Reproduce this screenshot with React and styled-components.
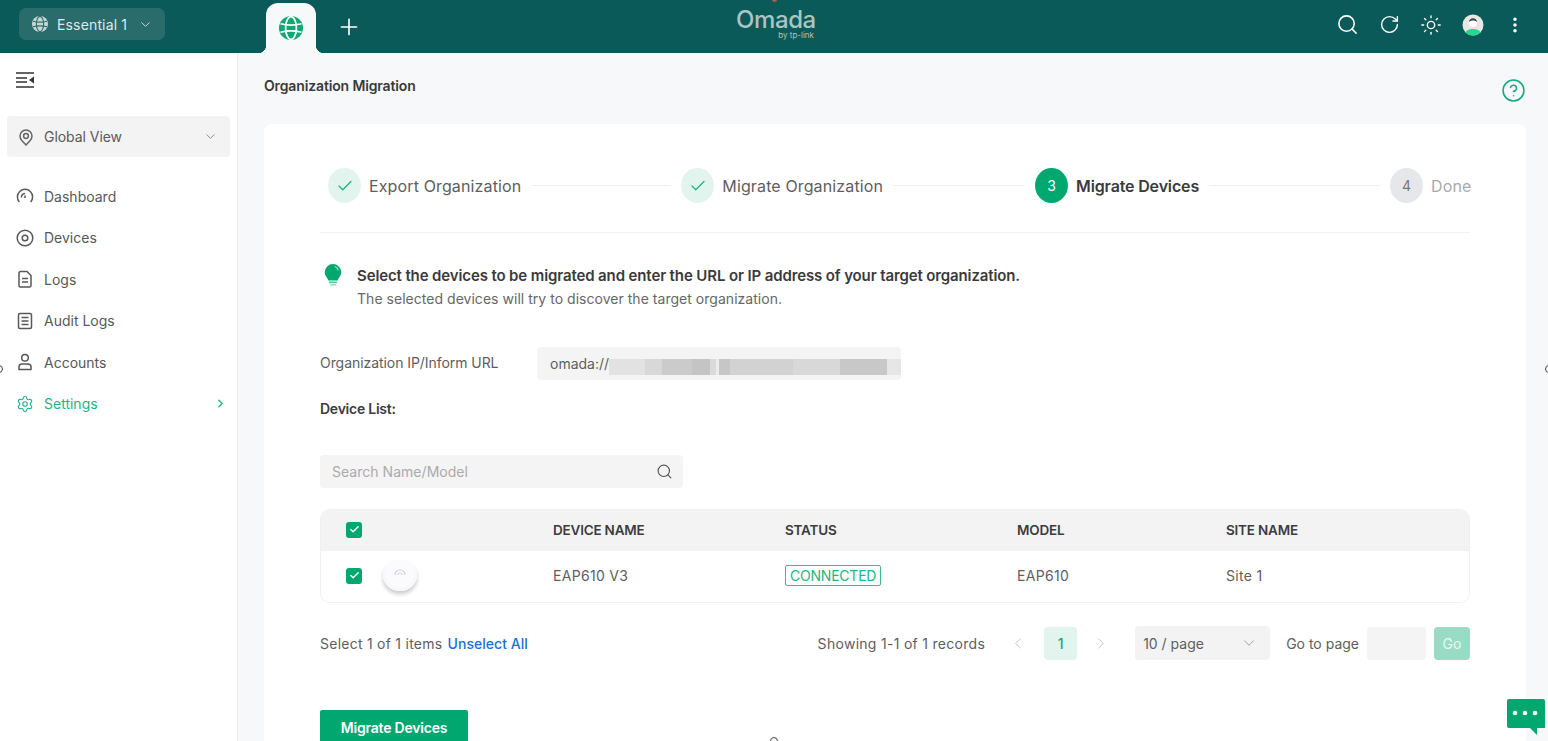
import React from "react";
import styled, { createGlobalStyle } from "styled-components";
import { Search, RotateCw, Sun, EllipsisVertical, ChevronDown, ChevronRight, ChevronLeft, Plus, Check, Settings as Gear, CircleHelp } from "lucide-react";

const Global = createGlobalStyle`
  html, body { margin: 0; padding: 0; height: 100%; overflow: hidden; background: #f7f8fa; }
  body { font-family: Inter, "Noto Sans", "Liberation Sans", sans-serif; color: #4a4a4a; -webkit-font-smoothing: antialiased; }
  * { box-sizing: border-box; }
`;
const GREEN = "#00a870";

const Page = styled.div`position: relative; width: 1548px; height: 741px; overflow: hidden; display: flex; flex-direction: column;`;
const Header = styled.header`height: 53px; flex: none; background: #0b5a5a; display: flex; align-items: flex-end;`;
const Switcher = styled.div`
  width: 146px; height: 32px; margin: 0 0 13px 19px; padding: 0 12px 0 13px; border-radius: 7px;
  background: #2a6c6b; color: #dfeae9; display: flex; align-items: center; font-size: 14px; letter-spacing: .15px;
  span { margin-left: 9px; flex: 1; }
`;
const Tab = styled.div`
  position: relative; width: 50px; height: 50px; margin-left: 101px; background: #f7f8fa; border-radius: 12px 12px 0 0;
  display: flex; align-items: center; justify-content: center;
  &::before, &::after { content: ""; position: absolute; bottom: 0; width: 8px; height: 8px; }
  &::before { left: -8px; background: radial-gradient(circle at 0 0, transparent 8px, #f7f8fa 8.5px); }
  &::after { right: -8px; background: radial-gradient(circle at 100% 0, transparent 8px, #f7f8fa 8.5px); }
`;
const AddTab = styled.div`width: 26px; margin: 0 0 13px 20px; color: #fff; display: flex;`;
const Logo = styled.div`
  margin: 0 0 11px 374px; width: 80px; height: 36px; color: #a9c6c3; padding-right: 2px;
  b { display: block; font-weight: 500; font-size: 24px; line-height: 20px; margin-top: 4px; letter-spacing: -.4px; }
  small { display: block; font-size: 8px; line-height: 9px; text-align: right; margin-top: 1px; letter-spacing: 0; }
`;
const HeaderIcons = styled.div`margin: 0 12px 0 auto; height: 53px; display: flex; align-items: center; padding-bottom: 4px;`;
const HeaderIcon = styled.div`width: 42px; display: flex; justify-content: center; color: #fff;`;

const Body = styled.div`flex: 1; display: flex; min-height: 0;`;
const Sidebar = styled.aside`width: 238px; flex: none; background: #fff; border-right: 1px solid #eceef0; padding: 19px 7px 0;`;
const Collapse = styled.div`height: 18px; margin-left: 9px; color: #333; display: flex;`;
const SiteSelect = styled.div`
  margin-top: 26px; height: 41px; width: 223px; border-radius: 4px; background: #f3f3f4; display: flex; align-items: center;
  padding: 0 12px 0 10px; font-size: 14px; color: #5a5a5a; letter-spacing: -.05px;
  span { margin-left: 9px; flex: 1; }
`;
const Nav = styled.nav`margin-top: 18.5px; display: flex; flex-direction: column;`;
const NavItem = styled.div`
  height: 41.5px; display: flex; align-items: center; padding-left: 9px; font-size: 14px; letter-spacing: 0;
  color: ${p => (p.$active ? "#1fb583" : "#585858")};
  span { margin-left: 10px; flex: 1; }
`;
const NavIcon = styled.svg`width: 18px; height: 18px; flex: none; fill: none; stroke: currentColor; stroke-width: 1.5;`;

const Main = styled.main`flex: 1; min-width: 0; padding: 0 22px 0 26px;`;
const TitleRow = styled.div`height: 71px; display: flex; justify-content: space-between; padding-top: 24px;`;
const Title = styled.h1`margin: 0; font-size: 14px; line-height: 18px; font-weight: 600; color: #3a3a3a; letter-spacing: -.14px;`;
const Help = styled.div`color: #17ad7b; margin: 1px 0 0 0; display: flex;`;
const Card = styled.section`background: #fff; border-radius: 8px; padding: 44px 56px 0; height: 640px;`;

const Stepper = styled.div`display: flex; align-items: center; height: 35px; padding-left: 8px;`;
const StepDot = styled.div`
  width: 33px; height: 35px; border-radius: 50%; flex: none; display: flex; align-items: center; justify-content: center; font-size: 14px;
  background: ${p => ({ done: "#e2f4ee", current: GREEN, todo: "#e6e7ea" }[p.$state])};
  color: ${p => ({ done: "#1fb583", current: "#fff", todo: "#777" }[p.$state])};
`;
const StepLabel = styled.div`
  margin-left: 8px; font-size: 16px; white-space: nowrap; letter-spacing: ${p => (p.$state === "current" ? "-.15px" : ".13px")};
  color: ${p => ({ done: "#5e5e5e", current: "#3a3a3a", todo: "#a9a9a9" }[p.$state])};
  font-weight: ${p => (p.$state === "current" ? 600 : 400)};
`;
const StepLine = styled.div`height: 1px; background: #f0f0f1; margin: 0 10px; width: ${p => p.$w}px; flex: none;`;
const Divider = styled.div`height: 1px; background: #f0f0f1; margin-top: 29px;`;

const Tip = styled.div`display: flex; margin-top: 30px; height: 44px;`;
const TipText = styled.div`margin-left: 14px;
  strong { display: block; font-size: 15px; line-height: 20px; font-weight: 600; color: #3a3a3a; letter-spacing: -.12px; margin-top: 3px; }
  p { margin: 4px 0 0; font-size: 14px; line-height: 18px; color: #676767; letter-spacing: .03px; }
`;
const FormRow = styled.div`display: flex; align-items: center; margin-top: 39px; height: 34px;`;
const FormLabel = styled.label`width: 217px; font-size: 14px; color: #5e5e5e; letter-spacing: -.06px; padding-bottom: 2px;`;
const UrlField = styled.div`
  width: 364px; height: 33px; border-radius: 4px; background: #f4f4f5; display: flex; align-items: center; padding-left: 13px;
  font-size: 14px; color: #5e5e5e; overflow: hidden;
`;
const Masked = styled.div`
  width: 296px; height: 16px; margin-top: 8px; flex: none;
  background: linear-gradient(90deg, #e2e2e2 0 12%, #d8d8d8 12% 18%, #cbcbcb 18% 28%, #c4c4c4 28% 34%, #dadada 34% 36%, #ececec 36% 37%, #c6c6c6 37% 41%, #d2d2d2 41% 62%, #d8d8d8 62% 78%, #c8c8c8 78% 94%, #e6e6e6 94%);
`;
const SectionLabel = styled.div`margin-top: 12px; height: 34px; line-height: 34px; font-size: 14px; font-weight: 600; color: #3c3c3c; letter-spacing: -.25px;`;
const SearchBox = styled.div`
  margin-top: 29px; width: 363px; height: 33px; border-radius: 4px; background: #f4f4f5; display: flex; align-items: center; justify-content: space-between;
  padding: 0 10px 0 12px; font-size: 14px; color: #ababab; letter-spacing: .03px;
  svg { color: #555; }
`;
const Table = styled.div`margin-top: 21px; width: 1150px; border: 1px solid #f0f0f1; border-radius: 10px; overflow: hidden;`;
const Row = styled.div`
  display: grid; grid-template-columns: 232px 232px 232px 209px 1fr; align-items: center; padding-bottom: 2px;
  height: ${p => (p.$head ? "41px" : "51px")}; background: ${p => (p.$head ? "#f3f3f4" : "#fff")};
  font-size: ${p => (p.$head ? "13.5px" : "14px")}; letter-spacing: ${p => (p.$head ? "-.2px" : ".3px")};
  font-weight: ${p => (p.$head ? 600 : 400)}; color: ${p => (p.$head ? "#3c3c3c" : "#5e5e5e")};
`;
const SelectCell = styled.div`display: flex; align-items: center; padding-left: 25px;`;
const CheckBox = styled.div`
  width: 16px; height: 16px; border-radius: 3px; background: ${GREEN}; color: #fff; display: flex; align-items: center; justify-content: center;
`;
const DevicePic = styled.div`
  width: 34px; height: 31px; margin: 0 0 0 21px; border-radius: 50%;
  background: radial-gradient(circle at 50% 40%, #fbfbfd 0 55%, #eeeef2 100%);
  box-shadow: 0 3px 4px rgba(0,0,0,.22);
  display: flex; align-items: flex-start; justify-content: center; padding-top: 7px; color: #d2d2da;
`;
const StatusBadge = styled.span`
  display: inline-block; border: 1px solid #3bbd94; border-radius: 2px; padding: 0 4px; height: 21px; line-height: 19px; width: 96px;
  color: #1fb583; font-size: 14px; letter-spacing: -.22px; white-space: nowrap;
`;
const Footer = styled.div`margin-top: 23px; width: 1150px; height: 34px; display: flex; align-items: center; font-size: 14px; color: #5e5e5e;`;
const SelectInfo = styled.div`letter-spacing: .25px; a { color: #1a70d6; font-weight: 500; letter-spacing: .03px; margin-left: 1px; }`;
const Pager = styled.div`margin-left: auto; display: flex; align-items: center;`;
const PagerText = styled.span`letter-spacing: ${p => p.$ls};`;
const PagerArrow = styled.div`width: 18px; margin: ${p => p.$m}; color: #b5b5b5; display: flex; justify-content: center;`;
const PageNum = styled.div`width: 33px; height: 33px; border-radius: 4px; background: #e2f4ee; color: #16a877; font-weight: 500; display: flex; align-items: center; justify-content: center;`;
const PageSize = styled.div`
  width: 135px; height: 34px; margin: 0 16px 0 0; border-radius: 4px; background: #f3f3f4; display: flex; align-items: center; justify-content: space-between;
  padding: 0 12px 0 8px; svg { color: #8f8f8f; }
`;
const GoInput = styled.div`width: 59px; height: 33px; margin-left: 8px; border-radius: 4px; background: #f4f4f5;`;
const GoButton = styled.div`width: 36px; height: 33px; margin-left: 8px; border-radius: 4px; background: #99dcc5; color: #e9f8f2; display: flex; align-items: center; justify-content: center;`;
const Primary = styled.button`
  display: block; margin-top: 50px; width: 148px; height: 34px; border: 0; border-radius: 2px; background: ${GREEN}; color: #fff;
  font: 600 14px Inter, sans-serif; letter-spacing: -.2px;
`;
const Chat = styled.svg`position: absolute; right: 3px; bottom: 5px; width: 38px; height: 37px;`;
const Speck = styled.i`
  position: absolute; left: ${p => p.$x}px; top: ${p => p.$y}px; width: 8px; height: 8px; border-radius: 50%;
  border: 1.5px solid #444; background: #fff;
`;
const TopDot = styled.i`position: absolute; left: 772px; top: -2px; width: 5px; height: 4px; border-radius: 50%; background: #c0563f;`;

const GlobeIcon = ({ size, bg, line }) => (
  <svg width={size} height={size} viewBox="0 0 24 24" fill="none">
    <circle cx="12" cy="12" r="12" fill={bg} />
    <ellipse cx="12" cy="12" rx="5.4" ry="11.4" stroke={line} strokeWidth="1.7" />
    <path d="M1.5 7.8C8 9.5 16 9.5 22.5 7.8M1.5 16.2C8 14.500 16 14.500 22.5 16.2" stroke={line} strokeWidth="1.7" />
  </svg>
);
const Avatar = () => (
  <svg width="22" height="22" viewBox="0 0 22 22">
    <defs><clipPath id="av"><circle cx="11" cy="11" r="10.5" /></clipPath></defs>
    <g clipPath="url(#av)">
      <rect width="22" height="22" fill="#e7e7e7" />
      <path d="M2 22c1-6 5-7 9-7s8 1 9 7z" fill="#22d98f" />
      <circle cx="11" cy="9" r="4" fill="#fff" />
      <path d="M7 8c0-5 8-5 8 0-2-2-6-2-8 0z" fill="#444" />
    </g>
  </svg>
);
const CollapseIcon = () => (
  <svg width="18" height="16" viewBox="0 0 18 16" fill="none" stroke="currentColor" strokeWidth="1.5">
    <path d="M0 1h18M0 6h11M0 10h11M0 15h18" />
    <path d="M13 8l5-3.4v6.8z" fill="currentColor" stroke="none" />
  </svg>
);
const PinIcon = () => (
  <NavIcon viewBox="0 0 18 18" style={{ color: "#666" }}>
    <path d="M9 17l-4-4.300A6.400 6.400 0 0 1 3 8a6 6 0 0 1 12 0c0 1.800-.7 3.400-2 4.700z" />
    <circle cx="9" cy="8" r="2.400" />
  </NavIcon>
);
const DashIcon = () => (
  <NavIcon viewBox="0 0 18 18" strokeWidth="1.7">
    <path d="M3.300 15A7.600 7.600 0 1 1 14.700 15M5.400 10.500A4 4 0 0 1 9 6.500M9 8.500v2.500" />
  </NavIcon>
);
const DevIcon = () => (
  <NavIcon viewBox="0 0 18 18"><circle cx="9" cy="9" r="7.800" /><circle cx="9" cy="9" r="2.800" /></NavIcon>
);
const LogIcon = () => (
  <NavIcon viewBox="0 0 18 18"><path d="M3 3a1.500 1.500 0 0 1 1.500-1.500h6.500L15 5.500v10a1.500 1.500 0 0 1-1.500 1.500h-9A1.500 1.500 0 0 1 3 15.500zM6 8.500h6M6 12h6" /></NavIcon>
);
const AuditIcon = () => (
  <NavIcon viewBox="0 0 18 18"><rect x="2.500" y="1.500" width="13" height="15" rx="1.500" /><path d="M5.500 5.500h7M5.500 9h7M5.500 12.500h7" /></NavIcon>
);
const AccountIcon = () => (
  <NavIcon viewBox="0 0 18 18"><circle cx="9" cy="4.800" r="3.300" /><path d="M3 16.500v-2.500a3 3 0 0 1 3-3h6a3 3 0 0 1 3 3v2.500z" /></NavIcon>
);
const Bulb = () => (
  <svg width="20" height="24" viewBox="0 0 20 24" style={{ flex: "none", marginLeft: 3 }}>
    <path d="M10 1a8.300 8.300 0 0 1 8.300 8.200c0 3.500-2.600 5.200-3.700 8.300H5.400C4.300 14.400 1.700 12.700 1.700 9.200A8.300 8.300 0 0 1 10 1z" fill={GREEN} />
    <path d="M11.500 3.500c2 .4 3.500 2 3.800 4" stroke="#7fe0bf" strokeWidth="1.200" fill="none" />
    <rect x="6" y="18.500" width="8" height="1.600" fill="#56c5a0" />
    <rect x="6.800" y="21" width="6.400" height="1.600" fill="#9ddcc7" />
  </svg>
);

const steps = [
  { state: "done", label: "Export Organization", line: 140 },
  { state: "done", label: "Migrate Organization", line: 132 },
  { state: "current", n: 3, label: "Migrate Devices", line: 171 },
  { state: "todo", n: 4, label: "Done" },
];
const nav = [
  { label: "Dashboard", icon: <DashIcon /> },
  { label: "Devices", icon: <DevIcon /> },
  { label: "Logs", icon: <LogIcon /> },
  { label: "Audit Logs", icon: <AuditIcon /> },
  { label: "Accounts", icon: <AccountIcon /> },
  { label: "Settings", icon: <Gear size={18} strokeWidth={1.5} />, active: true },
];
const Tick = () => <CheckBox><Check size={11} strokeWidth={3} /></CheckBox>;

export default function App() {
  return (
    <Page>
      <Global />
      <Header>
        <Switcher>
          <GlobeIcon size={16} bg="#c4d6d4" line="#2a6c6b" />
          <span>Essential 1</span>
          <ChevronDown size={15} strokeWidth={1.6} color="#c4d6d4" />
        </Switcher>
        <Tab><GlobeIcon size={24} bg="#0fa873" line="#fff" /></Tab>
        <AddTab><Plus size={26} strokeWidth={1.5} /></AddTab>
        <Logo><b>Omada</b><small>by tp-link</small></Logo>
        <HeaderIcons>
          <HeaderIcon><Search size={23} strokeWidth={1.6} /></HeaderIcon>
          <HeaderIcon><RotateCw size={21} strokeWidth={1.6} /></HeaderIcon>
          <HeaderIcon><Sun size={22} strokeWidth={1.5} /></HeaderIcon>
          <HeaderIcon><Avatar /></HeaderIcon>
          <HeaderIcon><EllipsisVertical size={20} strokeWidth={2.2} /></HeaderIcon>
        </HeaderIcons>
      </Header>
      <Body>
        <Sidebar>
          <Collapse><CollapseIcon /></Collapse>
          <SiteSelect><PinIcon /><span>Global View</span><ChevronDown size={15} strokeWidth={1.5} color="#8a8a8a" /></SiteSelect>
          <Nav>
            {nav.map(n => (
              <NavItem key={n.label} $active={n.active}>
                {n.icon}<span>{n.label}</span>
                {n.active && <ChevronRight size={13} strokeWidth={2.6} style={{ marginRight: 3 }} />}
              </NavItem>
            ))}
          </Nav>
        </Sidebar>
        <Main>
          <TitleRow>
            <Title>Organization Migration</Title>
            <Help><CircleHelp size={25} strokeWidth={1.5} /></Help>
          </TitleRow>
          <Card>
            <Stepper>
              {steps.map(s => (
                <React.Fragment key={s.label}>
                  <StepDot $state={s.state}>{s.n || <Check size={18} strokeWidth={1.7} />}</StepDot>
                  <StepLabel $state={s.state}>{s.label}</StepLabel>
                  {s.line && <StepLine $w={s.line} />}
                </React.Fragment>
              ))}
            </Stepper>
            <Divider />
            <Tip>
              <Bulb />
              <TipText>
                <strong>Select the devices to be migrated and enter the URL or IP address of your target organization.</strong>
                <p>The selected devices will try to discover the target organization.</p>
              </TipText>
            </Tip>
            <FormRow>
              <FormLabel>Organization IP/Inform URL</FormLabel>
              <UrlField>omada://<Masked /></UrlField>
            </FormRow>
            <SectionLabel>Device List:</SectionLabel>
            <SearchBox>Search Name/Model<Search size={17} strokeWidth={1.6} /></SearchBox>
            <Table>
              <Row $head>
                <SelectCell><Tick /></SelectCell>
                <div>DEVICE NAME</div><div>STATUS</div><div>MODEL</div><div>SITE NAME</div>
              </Row>
              <Row>
                <SelectCell><Tick /><DevicePic>
                  <svg width="12" height="9" viewBox="0 0 12 9" fill="none" stroke="currentColor" strokeWidth="1.200"><path d="M1 8a5 5 0 0 1 10 0M4 8a2 2 0 0 1 4 0" /></svg>
                </DevicePic></SelectCell>
                <div>EAP610 V3</div>
                <div><StatusBadge>CONNECTED</StatusBadge></div>
                <div>EAP610</div>
                <div>Site 1</div>
              </Row>
            </Table>
            <Footer>
              <SelectInfo>Select 1 of 1 items <a>Unselect All</a></SelectInfo>
              <Pager>
                <PagerText $ls=".29px">Showing 1-1 of 1 records</PagerText>
                <PagerArrow $m="0 17px 0 24px"><ChevronLeft size={19} strokeWidth={1.1} /></PagerArrow>
                <PageNum>1</PageNum>
                <PagerArrow $m="0 25px 0 15px"><ChevronRight size={19} strokeWidth={1.1} /></PagerArrow>
                <PageSize>10 / page<ChevronDown size={18} strokeWidth={1.1} /></PageSize>
                <PagerText $ls="0">Go to page</PagerText>
                <GoInput />
                <GoButton>Go</GoButton>
              </Pager>
            </Footer>
            <Primary>Migrate Devices</Primary>
          </Card>
        </Main>
      </Body>
      <Chat viewBox="0 0 38 37">
        <path d="M2 0h34a2 2 0 0 1 2 2v27H30v7l-7-7H2a2 2 0 0 1-2-2V2a2 2 0 0 1 2-2z" fill={GREEN} />
        <circle cx="8" cy="14" r="2.300" fill="#fff" /><circle cx="18" cy="14" r="2.300" fill="#fff" /><circle cx="28" cy="14" r="2.300" fill="#fff" />
      </Chat>
      <Speck $x={-5} $y={365} />
      <Speck $x={1545} $y={365} />
      <Speck $x={770} $y={737} />
      <TopDot />
    </Page>
  );
}
